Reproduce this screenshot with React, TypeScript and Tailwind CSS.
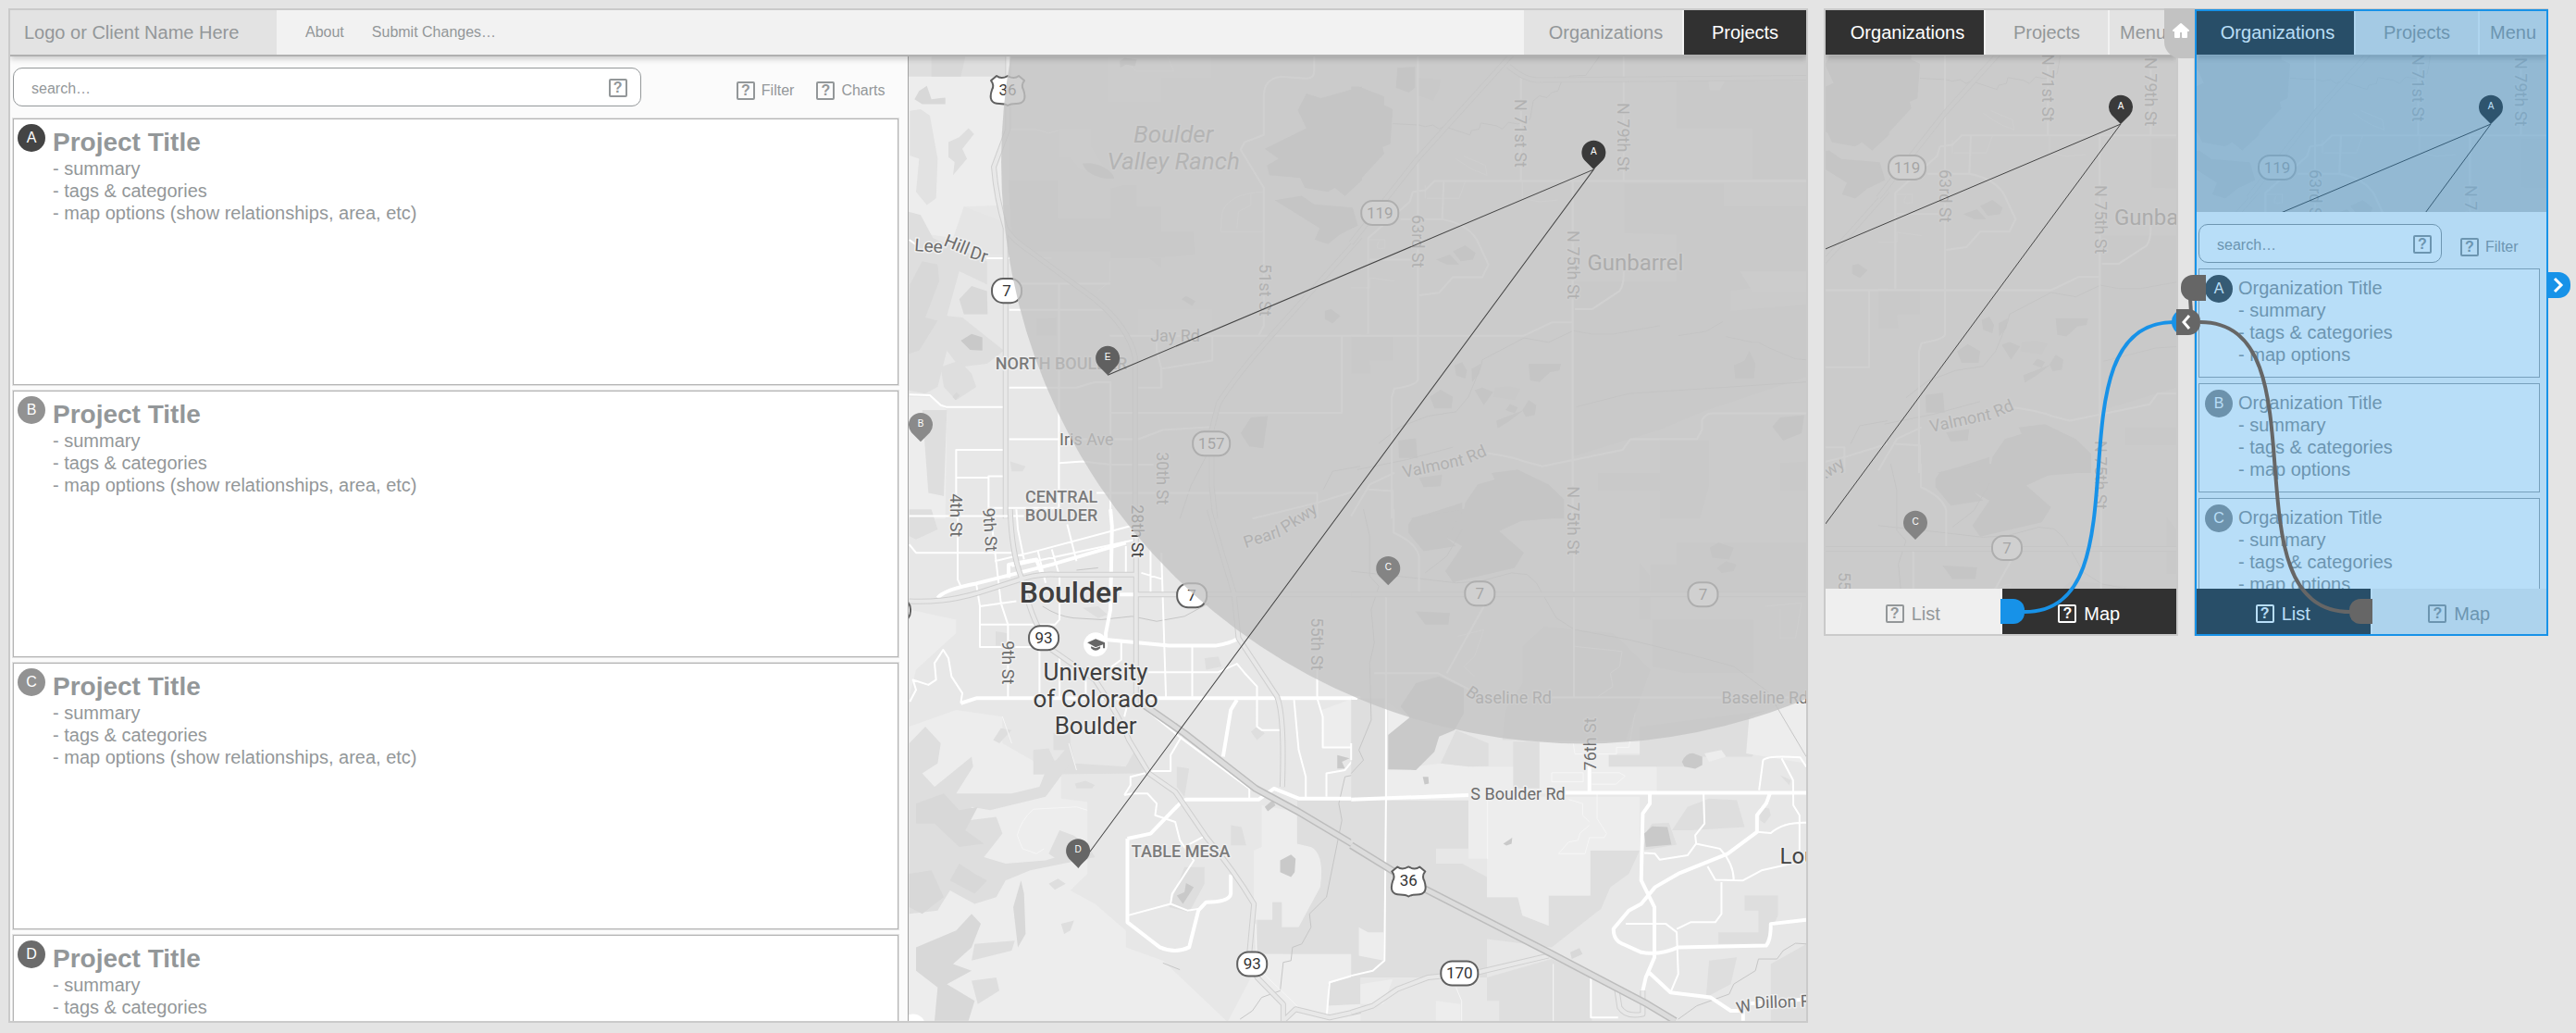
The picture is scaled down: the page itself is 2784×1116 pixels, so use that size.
import React from "react";

const MUTED = "text-[#939799]";

function UnknownIcon() {
  return (
    <span
      aria-hidden="true"
      className="flex size-5 shrink-0 items-center justify-center rounded-xs border-2 border-current text-base leading-none font-bold"
    >
      ?
    </span>
  );
}

/* ---------- Map ---------- */

type Area = [string, string];

const LIGHT = "#ededed";
const PARK = "#dedede";
const HILL = "#d8d8d8";
const WATER = "#c9c9c9";

interface Tile {
  transform: string;
  areas: Area[];
  creeks: string;
  minor: string;
  roads: string;
  wide: string;
  highways: string;
  freeway?: string;
}

const NW: Tile = {
  transform: "translate(970 0) scale(.33333 .35714)",
  areas: [
    ["M35 160H360V620L215 625L185 720L35 700Z", LIGHT],
    ["M35 160H360V232H35Z", PARK],
    ["M110 170H220L205 232H110Z", HILL],
    ["M70 275L95 260L110 300L155 295V315H80L55 300Z", HILL],
    ["M165 430L200 415L230 388L248 405L210 450L225 480L180 530L185 490L165 475Z", PARK],
    ["M40 335L75 330L105 350L130 480L125 600L95 620L60 580L70 480L40 470Z", "#e2e2e2"],
    ["M215 625L345 670V770H290L180 720Z", "#e5e5e5"],
    ["M35 640L75 650L115 720L290 790V860L200 820L160 955L210 960L345 1060L290 1100L200 1110L160 1060L130 1170L90 1190L35 1180Z", PARK],
    ["M40 860L80 790L130 800L135 850L90 960L130 970L70 1060L35 1070Z", HILL],
    ["M205 1030L240 1010L275 1020V1060L235 1058Z", WATER],
    ["M200 905L240 865L290 880L292 950L215 950Z", HILL],
    ["M140 1110L200 1090L240 1130L255 1170L190 1210L150 1170Z", PARK],
    ["M178 1200L190 1186L202 1195L188 1210Z", HILL],
    ["M35 1200L110 1200L160 1240L155 1568H35Z", LIGHT],
    ["M80 1240L160 1240L150 1500L100 1490Z", PARK],
    ["M685 170H1015V235H855V308H685Z", LIGHT],
    ["M523 390H625V440L650 480L700 545L590 510L560 475H523Z", LIGHT],
    ["M360 545H520V660H690V780H855V810L780 755L740 740L700 760H440L370 720Z", PARK],
    ["M730 560H775V625H855V700H960L965 770L830 780H690V570Z", PARK],
    ["M1190 450L1325 388L1297 333L1325 283L1372 297L1505 262V545L1450 593L1417 568L1395 580L1320 568L1305 538L1205 530L1197 500L1235 480Z", WATER],
    ["M1222 605L1310 592L1350 618L1475 628L1492 682L1435 708L1395 738L1352 725L1368 690Z", WATER],
    ["M600 495C640 485 700 515 702 540C670 545 610 530 600 495Z", WATER],
    ["M720 185L735 175L775 180L770 200L740 195L722 205Z", WATER],
    ["M920 905L935 895L965 910L955 925Z", WATER],
    ["M1385 940L1405 935L1435 955L1410 978L1385 965Z", WATER],
    ["M1112 1310L1145 1262L1200 1258L1185 1355L1140 1350Z", WATER],
    ["M365 1395L415 1410L405 1425H370Z", PARK],
    ["M450 965L515 960V1015H450Z", PARK],
    ["M780 935H1020V1010H780Z", LIGHT],
  ],
  creeks: "M1000 1380L950 1470L915 1568M1380 1480L1410 1425L1500 1410",
  minor: "M755 200L775 215H895L875 170M365 392H450L490 402L520 395M1048 700L1050 650Q1065 585 1187 580M1048 700H1187M1100 690L1105 640L1145 620V585M440 780H500M688 790V850L650 880",
  roads:
    "M288 781H365M360 858H690M362 937H690M688 1015H1500M362 1172H580L640 1155H690V1568M523 860V1536M362 1328H780L860 1300L1030 1290M38 1193L105 1195L140 1225L160 1231H350M190 1568V1360H352M190 1444H295M295 1568V1440H352M295 1536H525M525 1400L600 1395L690 1405H830M645 1490H1360V1568M1350 165V215Q1350 240 1320 237L1240 232Q1187 240 1187 290V408L1125 430L1112 452L1187 568V985L1170 1015M688 1248H1440V1015M38 725L60 740M780 1172H855V1115L840 1060V1035M855 1115L1020 1090V1015M1150 1568L1360 1520L1500 1480",
  wide: "",
  highways:
    "M358 165V390L312 505Q320 600 350 690V1568M350 690Q370 720 400 740L640 905Q750 990 770 1080V1568M1500 715L1390 830L1240 985Q1100 1130 1040 1220L1018 1300V1470L1030 1568",
};

const NE: Tile = {
  transform: "translate(1460 0) scale(.33333 .35714)",
  areas: [
    ["M0 262L25 262L107 292V318L135 330L127 435L102 445L107 465L0 573Z", WATER],
    ["M0 630L20 680L0 690Z", WATER],
    ["M145 265L150 205L207 202V265L187 280Z", WATER],
    ["M220 235L290 240L285 270L265 305L220 290Z", PARK],
    ["M1053 245H1475V540H1300V388H1053Z", PARK],
    ["M1158 245H1210L1195 272H1162Z", LIGHT],
    ["M720 555H1208V622H1475V850L1220 880L1200 860H1053V710L885 705V555Z", PARK],
    ["M720 850H1230V940L1475 920V1140L1140 1245L1000 1300L720 1380Z", PARK],
    ["M800 1430H1000V1330H1160V1470L1130 1568H1000V1484H800Z", PARK],
    ["M1300 880H1475V820H1260Z", LIGHT],
    ["M275 785L320 770L350 800H310Z", WATER],
    ["M330 760L370 742L403 765L395 785L355 790Z", WATER],
    ["M335 1105L360 1095L375 1120L370 1145L340 1135Z", WATER],
    ["M390 1115L420 1100L415 1130L392 1155Z", WATER],
    ["M575 1100H680L675 1120L645 1125L610 1155L580 1150Z", WATER],
    ["M465 1172L510 1168L550 1175L530 1210L460 1200Z", PARK],
    ["M400 1180L425 1172L460 1185L430 1225Z", WATER],
    ["M255 1200L290 1178L330 1200L325 1235L270 1235Z", WATER],
    ["M500 1240L515 1222L540 1232L530 1250Z", WATER],
    ["M470 1272L560 1240L510 1275L475 1295Z", WATER],
    ["M555 1240L575 1210L600 1225L595 1255L565 1260Z", WATER],
    ["M1240 1105L1275 1090L1290 1060L1310 1100L1305 1145H1245Z", WATER],
    ["M1365 1290L1390 1262L1468 1255L1460 1310L1400 1332Z", WATER],
    ["M153 1332L210 1325L215 1385H155Z", WATER],
    ["M220 1445L295 1435L290 1470L235 1473Z", WATER],
    ["M360 1568L370 1520L410 1465L465 1450L455 1430L540 1420L640 1465L690 1510V1568Z", WATER],
    ["M190 1568L260 1550L360 1520V1568Z", WATER],
    ["M60 1090H135V1015H0V1130H65Z", PARK],
    ["M1390 1400L1475 1395V1484H1390Z", PARK],
  ],
  creeks:
    "M135 374L220 378L240 383L265 378L285 390L300 382L385 408L390 395L415 390L420 372L470 380L490 390L510 370L540 375L580 360L590 305L610 290L635 295L650 280L670 275L680 250L710 230L760 228L805 170M1475 1088L1440 1085L1400 1070L1350 1050L1320 1035L1300 1035L1215 1018M1205 972L1150 1002L1060 1015M1000 985L850 1010L780 1010L720 1000L640 1035L560 1022L425 1088L420 1110L380 1200L340 1245L250 1258L160 1290L90 1340M20 1420L180 1390L330 1352M730 1230L900 1190L1475 1155",
  minor:
    "M340 480L380 505L400 515L440 530L435 500L365 472M245 600H350L370 548M555 550V600L610 610L670 605M90 730Q70 760 110 750V725H60M0 870H60V840L140 850M240 600V560",
  roads:
    "M216 165V1150Q210 1165 140 1175L132 1200V1568M0 1015H560L650 975H720M718 550V1568M550 235V545M200 580L240 575L270 547H1475M883 165V545M160 663H295L300 547M295 663Q390 680 415 740L445 800L425 838H330L285 885L220 893M725 935H780L870 880Q885 860 883 820M0 1560L60 1465L140 1430M440 1370Q520 1380 560 1395L620 1410L880 1360L905 1328H1120L1137 1300V1270Q1150 1250 1170 1250H1475M55 720V1010M55 720L190 610L200 580M60 785H215M55 1480L135 1485V1568",
  wide: "",
  highways: "M520 165L215 480L0 735M510 200Q560 240 600 242L1475 235",
};

const SW: Tile = {
  transform: "translate(970 550) scale(.33333 .361)",
  areas: [
    ["M38 300L190 330V370L60 480L38 560Z", LIGHT],
    ["M38 0H110L130 60L60 90L38 80Z", PARK],
    ["M38 650L190 600L340 620V700L530 800V865L615 875V1090L560 1140L640 1180L740 1260V1310L860 1350L1100 1560H38Z", LIGHT],
    ["M440 720L490 715L510 755L560 700L575 760L740 770L770 720L800 790L440 793Z", PARK],
    ["M505 670H560V720H505Z", PARK],
    ["M38 700L90 650L140 700L130 760L80 790L120 830L240 740L245 770L190 850L370 850L460 830L490 760L555 735L560 760L480 860L300 900L240 890L230 930L320 920L340 970L280 1040L350 1060L480 1050L620 1010L640 1040L430 1080L350 1110L320 1160L250 1180L170 1140L130 1200L38 1210Z", PARK],
    ["M60 880L150 850L200 900L260 890L220 960L280 1000L200 1010L120 940L60 940Z", HILL],
    ["M38 1090L110 1080L150 1160L80 1210L38 1190Z", HILL],
    ["M170 1110L200 1060L250 1090L290 1110L250 1150Z", HILL],
    ["M310 690L335 655L370 660L330 700Z", PARK],
    ["M375 1190L400 1110L410 1150L415 1270L390 1310Z", HILL],
    ["M60 1310L190 1260L240 1210L270 1240L240 1310L180 1360L240 1380L160 1420L250 1470L230 1530H120L130 1430L60 1380Z", HILL],
    ["M250 1300L380 1290L370 1320L240 1350Z", PARK],
    ["M240 1410L320 1400L330 1440L260 1480Z", PARK],
    ["M525 960L570 975L610 1000V1050L530 1055L490 1030Z", PARK],
    ["M575 820L610 812L640 825L630 835H580Z", PARK],
    ["M530 1240L572 1230L560 1260L540 1270Z", PARK],
    ["M490 1120L520 1105L545 1120L510 1138Z", PARK],
    ["M1180 885L1295 905V1000L1340 1010Q1385 1030 1370 1130L1300 1250H1245V1175H1215V1228H1155V1020L1180 1010Z", LIGHT],
    ["M1295 870H1500V1390L1400 1420L1390 1520L1290 1480L1245 1390L1250 1330H1165V1228H1215V1175H1245V1250H1300L1370 1130Q1385 1030 1340 1010L1295 1000Z", PARK],
    ["M1165 1330H1500V1568H1050L1145 1400Z", LIGHT],
    ["M1395 1420L1500 1385V1480L1395 1485Z", PARK],
    ["M1375 600L1480 565V712H1378Z", LIGHT],
    ["M1240 1050L1275 1033L1290 1045L1287 1085L1275 1100L1240 1085Z", WATER],
    ["M930 1070H995V1120L945 1205L880 1190Z", PARK],
    ["M905 1155L930 1145L935 1118L960 1130L925 1180Z", WATER],
    ["M1190 890L1215 870L1225 885L1200 903Z", WATER],
    ["M1425 735L1465 745L1440 755L1450 775H1425Z", WATER],
    ["M1080 945L1115 950L1130 1005H1080Z", PARK],
    ["M1145 665L1165 650L1190 670L1165 690Z", PARK],
    ["M995 445L1040 440L1050 470L1000 480Z", PARK],
    ["M905 770L945 775L930 860L905 830Z", PARK],
    ["M600 295L650 290L680 315L650 325Z", PARK],
    ["M318 365L355 370V408H318Z", PARK],
  ],
  creeks:
    "M470 290Q520 320 570 325L660 330L760 320L840 335L930 320L1010 280M580 182L650 175M860 1357L915 1377M1500 790L1450 800L1430 880L1440 930L1390 1160L1335 1210L1340 1250L1310 1300L1280 1310L1275 1350L1250 1355L1240 1440L1180 1460L1150 1500L1110 1525",
  minor:
    "M340 620L370 700M555 700L580 780M1160 1240L1165 1370L1300 1490L1390 1522M615 900L580 890L440 897Q400 930 388 975L405 1015L450 1030L475 1015",
  roads:
    "M195 0V210L205 230M38 105L60 130H370M38 20H410M315 155L450 125L755 50M370 170L775 90M255 222L267 290V412H460V560M267 345H510L525 330V200M267 290L385 275M300 0L335 280L358 345V565M385 0L390 60L410 150M455 125L480 220M500 120L525 200M550 45L580 155M740 110V190M855 130L870 565M820 120V255M790 190L855 208M525 440V560M610 510V560M812 487H1040L1100 462L1125 490L1165 530V650L1180 660H1240M955 410V560M725 395V450L680 480M1285 570L1300 720L1323 800V865M1360 480V565L1378 620V712H1480V745L1450 780L1390 790V860M750 565L735 620M735 855L760 850H810L840 880L835 915L900 935L915 990L960 1050L890 1150L885 1180M745 1215L885 1180L940 1200L975 1195M920 680L885 735V783H830L755 800V825L735 855M800 595L920 685L1140 835V865M205 580L210 550L175 500L165 445L148 420L120 460L125 510L100 525L50 510L60 540L40 575M940 1005L1000 975M1390 1522L1400 1415L1500 1388M1500 640V565",
  wide: "M130 265Q150 240 255 222L500 165L740 100M690 0L695 50L690 300L675 370V390M675 390L880 408H1030Q1080 400 1100 388M205 580L255 565H1500M1100 570L1080 600L1055 740M745 985L820 970L920 875L935 868H1170L1220 835L1300 865H1500M745 985V1235L850 1310Q900 1330 945 1310L975 1200L1000 1175Q1075 1175 1080 1150V1092M360 205V165L450 150L470 200M720 255H770",
  highways:
    "M365 0Q370 130 400 200Q430 310 460 360L500 420L640 510Q720 620 750 690L815 790L900 845L1000 980Q1090 1080 1155 1180L1140 1330L1165 1400L1250 1480V1568M1010 0Q1050 130 1090 250L1105 385L1230 560Q1255 620 1247 830M38 275Q150 280 260 250L380 215Q450 190 520 195H770M770 255H1500M773 0V580M1250 1530L1290 1495L1400 1520L1500 1500",
  freeway: "M790 580L930 670L1160 835L1300 905L1500 1015",
};

const SE: Tile = {
  transform: "translate(1460 550) scale(.33333 .361)",
  areas: [
    ["M0 565H110V870H0Z", PARK],
    ["M0 870H380V1015H275V1060H360L440 1100V1160H540L555 1215L640 1245V1155H775V1020H935L900 1090L840 1130L810 1195L650 1310L440 1285V1400H0Z", PARK],
    ["M110 870V780L290 760L395 770H525V855L440 870V1045H380V870Z", LIGHT],
    ["M440 860H935V1020H775V1155H640V1245L555 1215L540 1160H440Z", LIGHT],
    ["M650 1345L780 1400V1530H480V1470H440V1400Z", PARK],
    ["M120 580L190 622L120 675Z", LIGHT],
    ["M340 660L445 700V768L380 770L290 760Z", PARK],
    ["M610 695H935V730H835V770H990V850H525V770L610 760Z", LIGHT],
    ["M525 695H610V835H525Z", PARK],
    ["M835 735H935V650L1360 600L1300 740H1130V770H835Z", PARK],
    ["M1145 730L1200 720L1215 740L1160 755Z", LIGHT],
    ["M1290 620L1475 560V760L1280 730Z", LIGHT],
    ["M1160 865L1250 870L1275 950L1100 960H1040L1090 890Z", PARK],
    ["M1190 1265H1320V1200H1275V1155H1383V1215L1340 1300H1190Z", PARK],
    ["M1360 1360L1475 1300V1530H1360Z", PARK],
    ["M1160 1350L1250 1340L1230 1420L1150 1460Z", PARK],
    ["M25 1250L55 1265H105V1350L25 1335Z", LIGHT],
    ["M30 1420L135 1405L105 1480H30Z", LIGHT],
    ["M275 1470L355 1480V1530H275Z", LIGHT],
    ["M935 160L970 200V330H935ZM975 330H1305V490H1080L975 470Z", PARK],
    ["M1055 100L1475 100V250L970 255V165H1055Z", PARK],
    ["M555 410L625 350L850 370L970 480L890 690H490L500 600L555 520Z", PARK],
    ["M120 675L190 622L160 590L210 520L285 500L365 535V610L335 660L285 680L270 725L210 780L120 778Z", WATER],
    ["M1072 755Q1085 728 1110 730L1138 740V765L1115 776L1080 770Z", WATER],
    ["M945 1020L960 960L975 940L1030 938L1055 1003Z", PARK],
    ["M955 1010L950 970L975 948L1025 950L1038 1003Z", WATER],
    ["M330 0H690L680 25L550 35L480 65L560 130L530 175L330 218L305 185L360 110L310 85Z", WATER],
    ["M185 45L200 25L365 0L310 85L340 110L235 125L185 70Z", WATER],
    ["M1162 115L1190 100L1240 115L1225 150L1170 145Z", WATER],
    ["M1185 175L1215 155L1248 165L1240 185L1200 190Z", WATER],
    ["M208 305L320 310L315 345L240 345Z", WATER],
    ["M493 1000L522 982L520 1000L503 1006Z", WATER],
    ["M232 800L250 800L252 820L238 823Z", WATER],
    ["M1390 795L1425 810L1420 825Z", PARK],
    ["M1325 890L1355 895L1360 915L1340 940L1325 930Z", PARK],
    ["M710 1325L740 1312L750 1330L715 1345Z", HILL],
  ],
  creeks:
    "M0 185L200 205L340 220L420 215L520 190L570 195L600 220L665 325L725 360L900 390L1100 435L1240 470L1350 545L1475 740M1475 1300L1440 1298L1400 1320L1380 1345H1320L1310 1380L1240 1420L1225 1450L1165 1470L1120 1485L1060 1525M40 0L60 80V200L90 230L65 300L75 400L60 460L65 630L25 720L40 750L0 790M240 190L310 140L360 60",
  minor:
    "M720 700L725 732H860V712H900L920 610M650 788H752V815H650ZM780 788H870L888 798L858 822H780M705 868L750 880V915L772 935M797 850V925L828 970L820 982H772L758 1030H672L705 995L735 990L742 968L772 945M725 410L878 425L870 470L840 490L848 530L800 560M1340 290L1460 280L1440 385H1390V300M345 380L430 360L400 440L365 470L400 500M442 870V1045M655 1360V1530M340 1430L358 1470V1530",
  roads:
    "M0 567H20M113 260V865L108 1350L70 1380L0 1395M75 490H280L385 540M722 100V560M650 563H1475M138 0V70Q210 100 220 140V250M890 1240H1020L1055 1265L1060 1390L1035 1445M1142 850L1145 940L1115 975L1118 1000L1195 1015Q1240 1060 1240 1110M950 1028L985 1030L1000 1048L1090 1035L1118 1000M1155 1068L1180 1108L1270 1110L1330 1080L1475 1050M1200 1115V1210L1180 1235L1100 1235L1055 1255M1315 965L1360 968Q1400 935 1475 937M1322 840L1335 750Q1350 735 1455 742L1475 770M1395 745L1432 810L1433 885L1453 915V1020M777 1400V1520H865M310 490L430 290M0 700V750",
  wide: "M0 868L380 855M690 848H1475M772 770V848M968 850V880L945 910L940 1110L983 1190V1340L955 1400L945 1440M1357 850L1345 880L1315 915V965L1220 1030L1060 1090L985 1130L940 1180L900 1200L850 1255Q850 1290 880 1300L940 1325Q1000 1335 1060 1310L1345 1305Q1360 1290 1360 1240L1475 1228M965 1385L1035 1445L1165 1460L1230 1500L1270 1500V1530M1270 1480L1475 1465",
  highways: "M0 255H1475M0 1505L70 1485L150 1435L250 1400L410 1385L640 1335M860 1430L870 1490Q890 1520 945 1510V1440",
  freeway: "M0 1005L185 1110L640 1325L960 1480L1050 1530",
};

function TileArt({ tile }: { tile: Tile }) {
  return (
    <g
      transform={tile.transform}
      fill="none"
      strokeLinejoin="round"
      className="[&_path]:[vector-effect:non-scaling-stroke]"
    >
      {tile.areas.map(([d, fill], i) => (
        <path key={i} d={d} fill={fill} />
      ))}
      <path d={tile.creeks} stroke="#c6c6c6" strokeWidth="1" />
      <path d={tile.minor} stroke="#f6f6f6" strokeWidth="1" />
      <path d={tile.roads} stroke="#fff" strokeWidth="2" />
      <path d={tile.wide} stroke="#fff" strokeWidth="4" />
      <path d={tile.highways} stroke="#cfcfcf" strokeWidth="6" />
      <path d={tile.highways} stroke="#e8e8e8" strokeWidth="4" />
      {tile.freeway && (
        <>
          <path d={tile.freeway} stroke="#bdbdbd" strokeWidth="8" />
          <path d={tile.freeway} stroke="#dcdcdc" strokeWidth="5" />
        </>
      )}
    </g>
  );
}

interface MapLabel {
  x: number;
  y: number;
  text: string;
  rotate?: number;
  size?: number;
  color?: string;
  weight?: number;
  italic?: boolean;
  middle?: boolean;
}

const LABELS: MapLabel[] = [
  { x: 1268, y: 154, text: "Boulder", size: 26, italic: true, middle: true, color: "#7d7d7d" },
  { x: 1268, y: 183, text: "Valley Ranch", size: 26, italic: true, middle: true, color: "#7d7d7d" },
  { x: 988, y: 271, text: "Lee", rotate: 4, size: 19 },
  { x: 1019, y: 265, text: "Hill", rotate: 22, size: 19 },
  { x: 1047, y: 278, text: "Dr", rotate: 18, size: 19 },
  { x: 1361, y: 285, text: "51st St", rotate: 90 },
  { x: 1243, y: 369, text: "Jay Rd" },
  { x: 1147, y: 399, text: "NORTH BOULDER", weight: 500, middle: true, color: "#7b7b7b" },
  { x: 1145, y: 481, text: "Iris Ave" },
  { x: 1250, y: 488, text: "30th St", rotate: 90 },
  { x: 1147, y: 543, text: "CENTRAL", weight: 500, middle: true, color: "#7b7b7b" },
  { x: 1147, y: 563, text: "BOULDER", weight: 500, middle: true, color: "#7b7b7b" },
  { x: 1027, y: 533, text: "4th St", rotate: 90 },
  { x: 1062, y: 549, text: "9th St", rotate: 86 },
  { x: 1223, y: 545, text: "28th St", rotate: 90, color: "#444" },
  { x: 1346, y: 592, text: "Pearl", rotate: -18 },
  { x: 1389, y: 576, text: "Pkwy", rotate: -33 },
  { x: 1157, y: 651, text: "Boulder", size: 32, weight: 500, middle: true, color: "#3f3f3f" },
  { x: 1083, y: 692, text: "9th St", rotate: 90 },
  { x: 1184, y: 735, text: "University", size: 26, middle: true, color: "#3f3f3f" },
  { x: 1184, y: 764, text: "of Colorado", size: 26, middle: true, color: "#3f3f3f" },
  { x: 1184, y: 793, text: "Boulder", size: 26, middle: true, color: "#3f3f3f" },
  { x: 1417, y: 667, text: "55th St", rotate: 90 },
  { x: 1276, y: 926, text: "TABLE MESA", weight: 500, middle: true, color: "#7b7b7b" },
  { x: 1637, y: 107, text: "N 71st St", rotate: 90 },
  { x: 1748, y: 111, text: "N 79th St", rotate: 90 },
  { x: 1526, y: 232, text: "63rd St", rotate: 90 },
  { x: 1694, y: 249, text: "N 75th St", rotate: 90 },
  { x: 1715, y: 292, text: "Gunbarrel", size: 24, color: "#555" },
  { x: 1517, y: 516, text: "Valmont", rotate: -12 },
  { x: 1588, y: 500, text: "Rd", rotate: -24 },
  { x: 1694, y: 525, text: "N 75th St", rotate: 90 },
  { x: 1583, y: 750, text: "B", rotate: 35 },
  { x: 1594, y: 760, text: "aseline Rd" },
  { x: 1860, y: 760, text: "Baseline Rd" },
  { x: 1725, y: 832, text: "76th St", rotate: -90 },
  { x: 1589, y: 864, text: "S Boulder Rd" },
  { x: 1923, y: 933, text: "Louisville", size: 24, color: "#444" },
  { x: 1878, y: 1095, text: "W", rotate: -15 },
  { x: 1896, y: 1089, text: "Dillon Rd", rotate: -2 },
];

const ROUTES: [number, number, string][] = [
  [1088, 314, "7"],
  [1309, 479, "157"],
  [1288, 643, "7"],
  [1128, 689, "93"],
  [1353, 1041, "93"],
  [1491, 230, "119"],
  [1599, 641, "7"],
  [1840, 642, "7"],
  [1577, 1051, "170"],
];

function Interstate({ x, y }: { x: number; y: number }) {
  return (
    <g transform={`translate(${x} ${y})`}>
      <path
        d="M-12-15Q-7-11 0-15Q7-11 12-15L18-10Q14-5 17 0Q22 15 9 15Q3 15 0 17Q-3 15-9 15Q-22 15-17 0Q-14-5-18-10Z"
        fill="#fff"
        stroke="#606060"
        strokeWidth="2"
        strokeLinejoin="round"
      />
      <text y="6" fontSize="17" textAnchor="middle" fill="#333">
        36
      </text>
    </g>
  );
}

const SHIELDS: [number, number][] = [
  [1089, 97],
  [1522, 951],
];

const PINS: [number, number, string, string][] = [
  [1722, 183, "A", "#3a3a3a"],
  [995, 477, "B", "#8a8a8a"],
  [1500, 632, "C", "#848484"],
  [1165, 937, "D", "#666666"],
  [1197, 405, "E", "#606060"],
];

interface View {
  x: number;
  y: number;
  w: number;
  h: number;
}

/* True when a box of the map reaches into the part that is shown. */
function shows(v: View, x1: number, y1: number, x2: number, y2: number) {
  return x2 > v.x && x1 < v.x + v.w && y2 > v.y && y1 < v.y + v.h;
}

function labelShows(v: View, l: MapLabel) {
  const size = l.size ?? 18;
  const length = l.text.length * size * 0.5;
  const angle = ((l.rotate ?? 0) * Math.PI) / 180;
  const startX = l.middle ? l.x - length / 2 : l.x;
  const endX = startX + Math.cos(angle) * length;
  const endY = l.y + Math.sin(angle) * length;
  return shows(v, Math.min(startX, endX), Math.min(l.y, endY) - 12, Math.max(startX, endX), Math.max(l.y, endY) - 4);
}

function BoulderMap({ view }: { view: View }) {
  return (
    <svg
      role="img"
      aria-label="Map of Boulder"
      viewBox={`${view.x} ${view.y} ${view.w} ${view.h}`}
      preserveAspectRatio="xMinYMin slice"
      className="block h-full w-full font-['Roboto',sans-serif]"
    >
      <rect x="960" y="40" width="1000" height="1080" fill="#e7e7e7" />
      <TileArt tile={NW} />
      <TileArt tile={NE} />
      <TileArt tile={SW} />
      <TileArt tile={SE} />
      {LABELS.filter((l) => labelShows(view, l)).map((l, i) => (
        <text
          key={i}
          transform={`translate(${l.x} ${l.y}) rotate(${l.rotate ?? 0})`}
          fontSize={l.size ?? 18}
          fontWeight={l.weight ?? 400}
          fontStyle={l.italic ? "italic" : "normal"}
          textAnchor={l.middle ? "middle" : "start"}
          fill={l.color ?? "#6c6c6c"}
          stroke="#efefef"
          strokeWidth="3"
          strokeLinejoin="round"
          paintOrder="stroke"
        >
          {l.text}
        </text>
      ))}
      <rect x="952" y="646" width="32" height="26" rx="12" fill="#fff" stroke="#606060" strokeWidth="2" />
      <circle cx="987" cy="1108" r="13" fill="#fff" />
      {ROUTES.filter(([x, y]) => shows(view, x - 20, y - 13, x + 20, y + 13)).map(([x, y, n], i) => {
        const w = n.length === 3 ? 40 : 32;
        return (
          <g key={i}>
            <rect x={x - w / 2} y={y - 13} width={w} height="26" rx="12" fill="#fff" stroke="#606060" strokeWidth="2" />
            <text x={x} y={y + 6} fontSize="17" textAnchor="middle" fill="#333">
              {n}
            </text>
          </g>
        );
      })}
      {SHIELDS.filter(([x, y]) => shows(view, x - 20, y - 16, x + 20, y + 16)).map(([x, y]) => (
        <Interstate key={x} x={x} y={y} />
      ))}
      <circle cx="1184" cy="696" r="13" fill="#fff" />
      <path d="M1175 694L1184 690L1194 694V700H1192V696L1184 699ZM1179 698L1184 700L1189 698V700Q1184 705 1179 700Z" fill="#666" />
      <circle cx="1710" cy="175" r="628" fill="#c4c4c4" fillOpacity="0.79" />
      <path d="M1197 405L1722 183L1165 937" fill="none" stroke="#444" strokeWidth="1" />
      {PINS.filter(([x, y]) => shows(view, x - 13, y - 33, x + 13, y)).map(([x, y, n, fill]) => (
        <g key={n} transform={`translate(${x} ${y})`}>
          <path d="M0 0L-10-10A13 13 0 1 1 10-10Z" fill={fill} />
          <text
            y="-16"
            fontSize="10"
            textAnchor="middle"
            fill="#fff"
            className="font-['Liberation_Sans',Arial,sans-serif]"
          >
            {n}
          </text>
        </g>
      ))}
    </svg>
  );
}

/* ---------- Shared pieces ---------- */

function Badge({ letter, tone }: { letter: string; tone: string }) {
  return (
    <span className={`flex size-[30px] shrink-0 items-center justify-center rounded-full text-base text-white ${tone}`}>
      {letter}
    </span>
  );
}

function SearchBox({ id, className }: { id: string; className: string }) {
  return (
    <div className={`flex h-[42px] items-center rounded-[10px] border border-[#94989a] bg-white pl-[19px] ${className}`}>
      <label htmlFor={id} className="sr-only">
        Search
      </label>
      <input
        id={id}
        type="text"
        placeholder="search…"
        className="min-w-0 flex-1 bg-transparent pt-1 text-base outline-none placeholder:text-[#939799] placeholder:opacity-100"
      />
      <button type="button" aria-label="Run search" className="pt-[2px]">
        <UnknownIcon />
      </button>
    </div>
  );
}

function ToolButton({ label }: { label: string }) {
  return (
    <button type="button" className="flex items-center gap-[7px] text-base">
      <UnknownIcon />
      {label}
    </button>
  );
}

const DARK = "bg-[#313131] text-white";
const PALE = "bg-[#e3e3e3] text-[#939799]";

function Tab({ label, active, className }: { label: string; active?: boolean; className: string }) {
  return (
    <button type="button" className={`h-full text-xl ${active ? DARK : PALE} ${className}`}>
      {label}
    </button>
  );
}

/* ---------- Desktop frame ---------- */

const PROJECTS: [string, string][] = [
  ["A", "bg-[#444444]"],
  ["B", "bg-[#929292]"],
  ["C", "bg-[#929292]"],
  ["D", "bg-[#6b6b6b]"],
];

function Desktop() {
  return (
    <section className="flex h-[calc(100vh-20px)] min-w-0 flex-1 flex-col overflow-hidden border-2 border-[#cacaca] bg-white">
      <header className="relative z-10 flex h-[50px] shrink-0 border-b-2 border-[#b0b0b0] bg-[#f2f2f2] shadow-[0_3px_6px_rgba(0,0,0,0.18)]">
        <div className="flex w-[288px] items-center bg-[#e3e3e3] pl-[15px] text-xl">Logo or Client Name Here</div>
        <nav className="flex items-center gap-[30px] pl-[31px] text-base">
          <a href="#about">About</a>
          <a href="#submit">Submit Changes…</a>
        </nav>
        <div className="ml-auto flex gap-[2px]">
          <Tab label="Organizations" className="w-[171px] pl-1.5" />
          <Tab label="Projects" active className="w-[132px]" />
        </div>
      </header>
      <main className="grid min-h-0 flex-1 grid-cols-2">
        <div className="flex min-h-0 flex-col overflow-hidden border-r border-[#a3a3a3] bg-[#fbfbfb] pt-3 pr-[10px] pl-[3px]">
          <div className="flex shrink-0 items-center justify-between pr-[14px]">
            <SearchBox id="search-projects" className="w-[72%] pr-[14px]" />
            <div className="flex gap-6 pt-2">
              <ToolButton label="Filter" />
              <ToolButton label="Charts" />
            </div>
          </div>
          <ul className="mt-[13px] flex flex-col gap-[6px]">
            {PROJECTS.map(([letter, tone]) => (
              <li
                key={letter}
                className="flex h-[288px] shrink-0 gap-[8px] border border-[#b4b4b4] bg-white pt-[5px] pl-1 outline outline-[#e2e2e2]"
              >
                <Badge letter={letter} tone={tone} />
                <div className="pt-1 text-xl leading-6">
                  <h2 className="text-[28px] leading-8 font-bold">Project Title</h2>
                  <p>- summary</p>
                  <p>- tags &amp; categories</p>
                  <p>- map options (show relationships, area, etc)</p>
                </div>
              </li>
            ))}
          </ul>
        </div>
        <div className="min-h-0 overflow-hidden">
          <BoulderMap view={{ x: 982, y: 61, w: 970, h: 1042 }} />
        </div>
      </main>
    </section>
  );
}

/* ---------- Mobile frames ---------- */

const ORGANIZATIONS: [string, string][] = [
  ["A", "bg-[#444444]"],
  ["B", "bg-[#929292]"],
  ["C", "bg-[#929292]"],
];

function Mobile({ view }: { view: "map" | "list" }) {
  const bottom = "flex flex-1 items-center justify-center gap-2 pt-1 text-xl";
  const idle = "bg-[#efefef] text-[#939799]";
  return (
    <section className="relative flex h-[678px] w-[383px] shrink-0 flex-col overflow-hidden border-2 border-[#cacaca] bg-white">
      <header className="relative z-10 flex h-[49px] shrink-0 gap-[2px] border-b border-[#b5b5b5] bg-[#f2f2f2] shadow-[0_3px_6px_rgba(0,0,0,0.18)]">
        <Tab label="Organizations" active className="w-[171px] pl-1.5" />
        <Tab label="Projects" className="w-[132px]" />
        <Tab label="Menu" className="flex-1" />
      </header>
      {view === "map" ? (
        <div className="min-h-0 flex-1">
          <BoulderMap view={{ x: 1403, y: 109, w: 379, h: 576 }} />
        </div>
      ) : (
        <>
          <div className="h-[169px] shrink-0">
            <BoulderMap view={{ x: 1403, y: 109, w: 379, h: 169 }} />
          </div>
          <div className="flex min-h-0 flex-1 flex-col overflow-hidden bg-[#fafafa] pt-[13px] pr-[7px] pl-[3px]">
            <div className="flex shrink-0 items-center gap-5">
              <SearchBox id="search-organizations" className="w-[263px] pr-[10px]" />
              <div className="pt-2">
                <ToolButton label="Filter" />
              </div>
            </div>
            <ul className="mt-[6px] flex flex-col gap-[6px]">
              {ORGANIZATIONS.map(([letter, tone]) => (
                <li key={letter} className="flex h-[118px] shrink-0 gap-[6px] border border-[#a3a7a9] bg-white pt-[6px] pl-[6px]">
                  <Badge letter={letter} tone={tone} />
                  <div className="pt-[2px] text-xl leading-6">
                    <h2>Organization Title</h2>
                    <p>- summary</p>
                    <p>- tags &amp; categories</p>
                    <p>- map options</p>
                  </div>
                </li>
              ))}
            </ul>
          </div>
        </>
      )}
      <nav className="relative flex h-[49px] shrink-0 gap-[2px] bg-[#f8f8f8]">
        <button type="button" className={`${bottom} ${view === "list" ? DARK : idle}`}>
          <UnknownIcon />
          List
        </button>
        <button type="button" className={`${bottom} ${view === "map" ? DARK : idle}`}>
          <UnknownIcon />
          Map
        </button>
      </nav>
    </section>
  );
}

/* Prototype links between the two mobile frames. */
function Connectors() {
  return (
    <svg
      aria-hidden="true"
      viewBox="1971 9 783 678"
      className="pointer-events-none absolute inset-0 z-20 h-full w-full overflow-visible"
      fill="none"
    >
      <path d="M2372 9H2339V45A18 18 0 0 0 2357 63H2372Z" fill="#c2c2c2" />
      <path d="M2357 26L2365 33H2363V40H2359V34H2355V40H2351V33H2349Z" fill="#fff" stroke="#fff" strokeWidth="2" strokeLinejoin="round" />
      <rect x="2373" y="11" width="380" height="675" fill="#1593e9" fillOpacity="0.3" stroke="#1792e8" strokeWidth="2" />
      <path d="M2361 334A14 14 0 0 0 2361 362Z" fill="#1792e8" />
      <path d="M2188 661C2326 661 2209 348 2350 348" stroke="#1792e8" strokeWidth="4" />
      <path d="M2162 647H2176A12 12 0 0 1 2188 659V662A12 12 0 0 1 2176 674H2162Z" fill="#1792e8" />
      <path d="M2367 322L2368 338" stroke="#666" strokeWidth="4" />
      <path d="M2384 297H2370A13 13 0 0 0 2357 310V312A13 13 0 0 0 2370 325H2384Z" fill="#666" />
      <path d="M2378 348C2516 348 2401 661 2540 661" stroke="#666" strokeWidth="4" />
      <path d="M2352 334H2365A13 13 0 0 1 2378 347V349A13 13 0 0 1 2365 362H2352Z" fill="#666" />
      <path d="M2366 341L2360 348L2366 355" stroke="#fff" strokeWidth="3" />
      <path d="M2564 647H2551A12 12 0 0 0 2539 659V662A12 12 0 0 0 2551 674H2564Z" fill="#666" />
      <path d="M2754 294H2765A13 13 0 0 1 2778 307V309A13 13 0 0 1 2765 322H2754Z" fill="#1792e8" />
      <path d="M2761 301L2768 308L2761 315" stroke="#fff" strokeWidth="3" />
    </svg>
  );
}

export default function App() {
  return (
    <div
      className={`flex min-h-screen items-start gap-[17px] bg-[#e4e4e4] pt-[9px] pr-[30px] pl-[9px] font-['Liberation_Sans',Arial,sans-serif] ${MUTED}`}
    >
      <Desktop />
      <div className="relative flex shrink-0 gap-[17px]">
        <Mobile view="map" />
        <Mobile view="list" />
        <Connectors />
      </div>
    </div>
  );
}
